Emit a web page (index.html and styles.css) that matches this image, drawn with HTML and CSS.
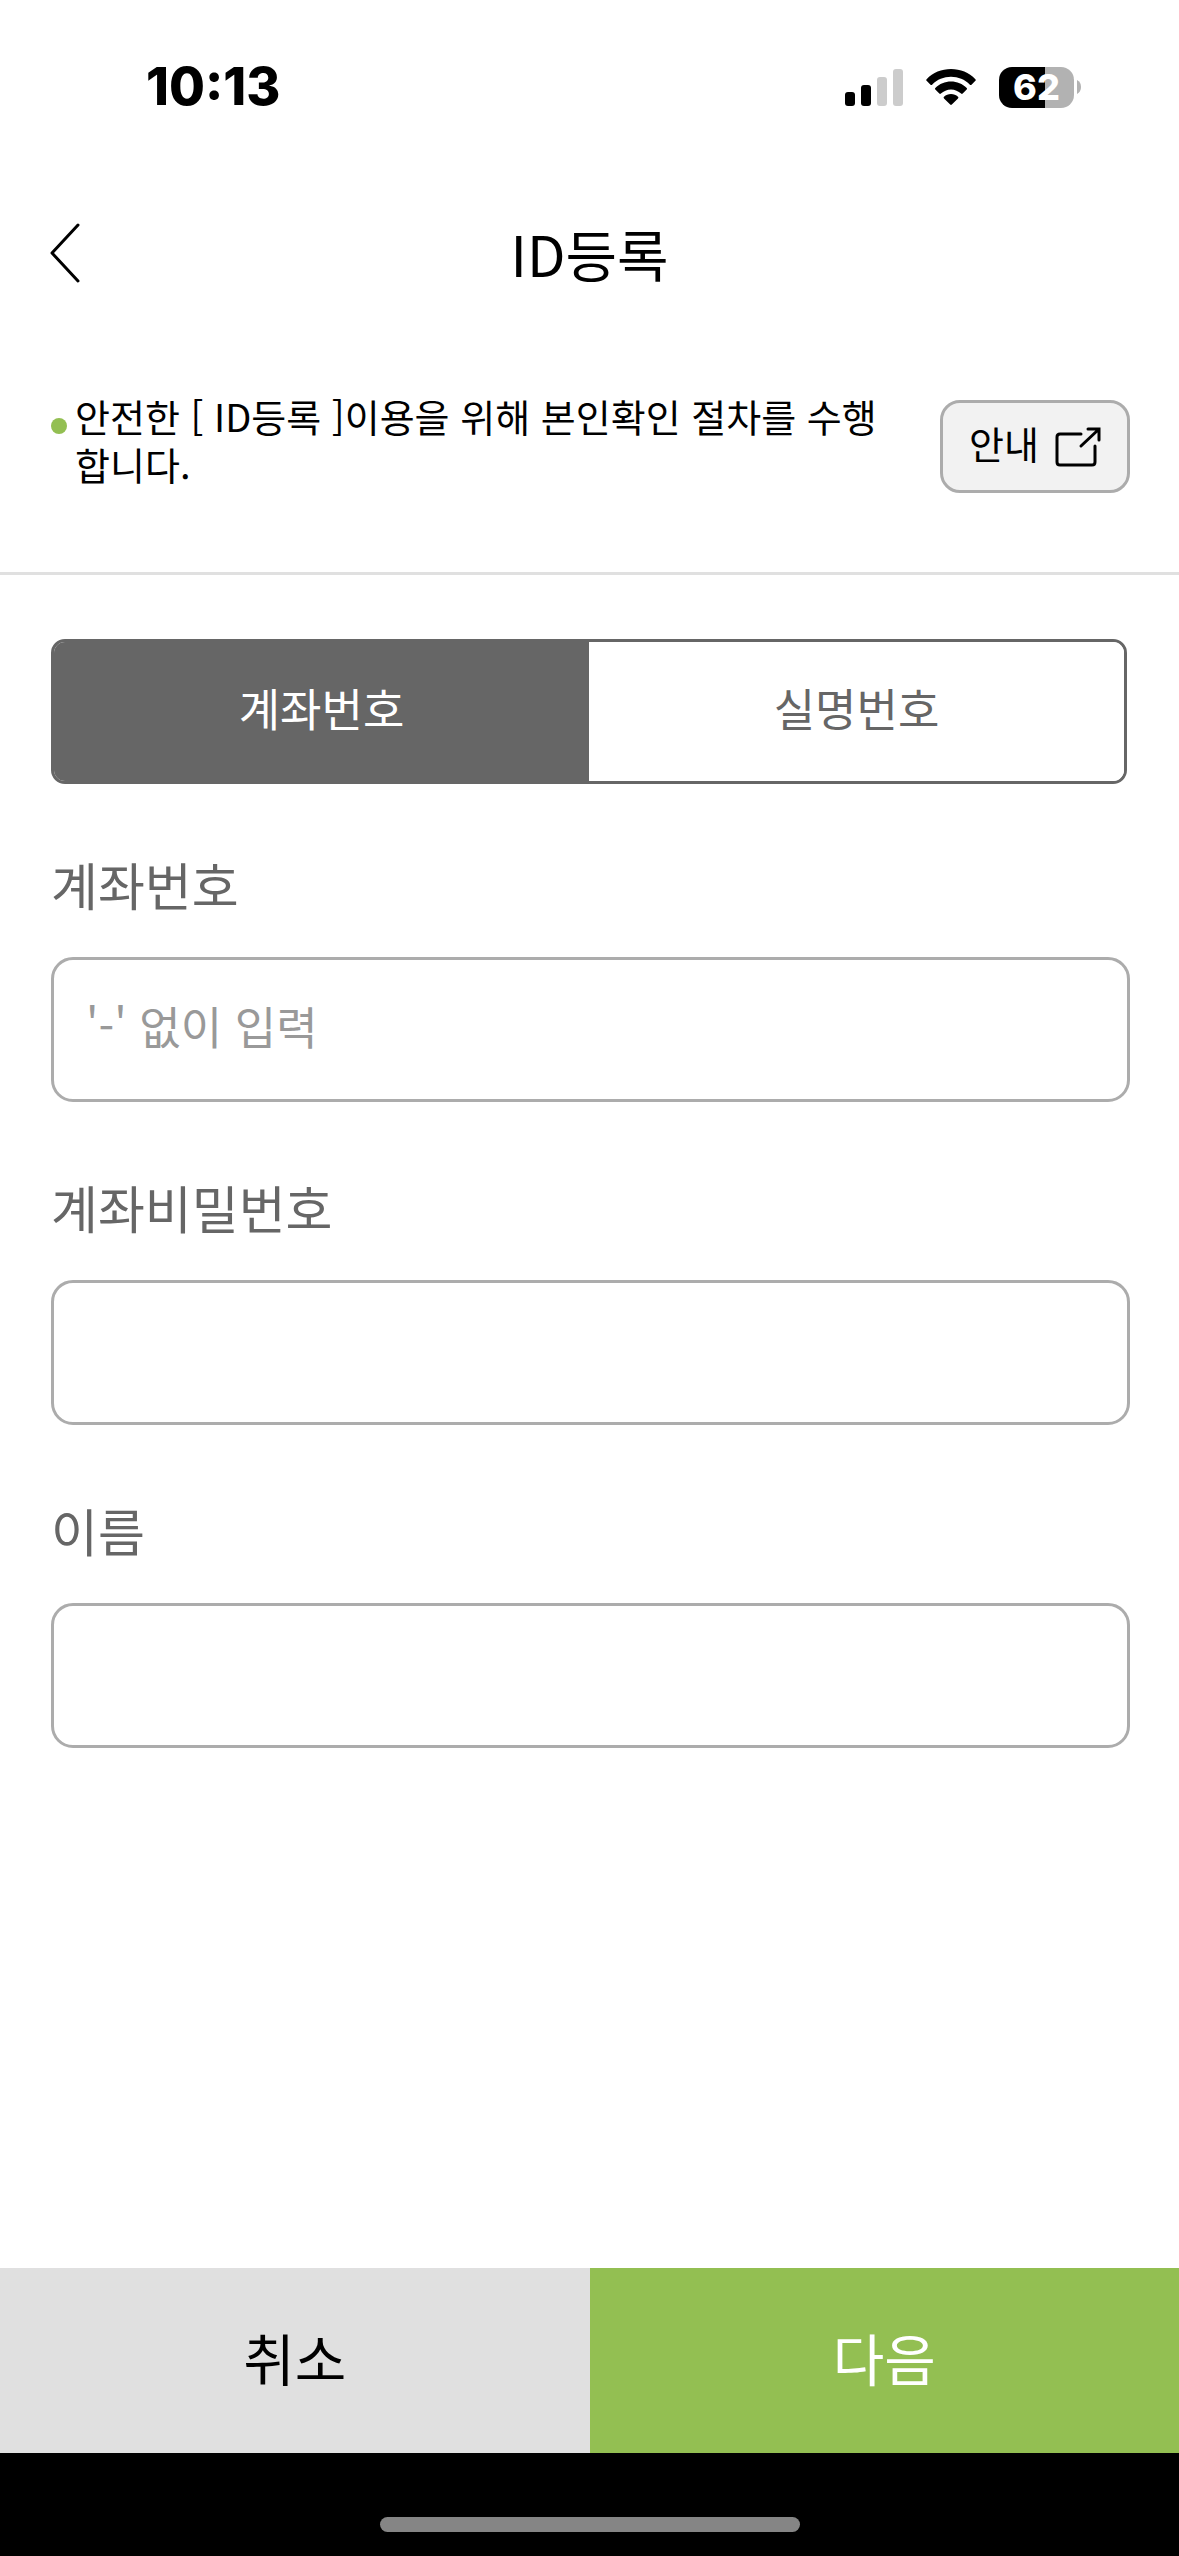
FILE: index.html
```html
<!DOCTYPE html>
<html lang="ko">

<head>
    <meta charset="UTF-8">
    <meta name="viewport" content="width=device-width,initial-scale=1">
    <title>ID등록</title>
    <link rel="stylesheet" href="styles.css">
</head>

<body>
    <div class="wrap">
        <div class="status">
            <span class="time">10:13</span>
            <div class="status-icons">
                <svg class="signal" width="58" height="38" viewBox="0 0 58 38">
                    <rect x="0" y="24" width="10" height="14" rx="3" />
                    <rect x="16" y="17" width="10" height="21" rx="3" />
                    <rect class="off" x="32" y="9" width="10" height="29" rx="3" />
                    <rect class="off" x="48" y="1" width="10" height="37" rx="3" />
                </svg>
                <svg class="wifi" width="50" height="38" viewBox="0 0 50 38">
                    <path d="M.6 11.2C7 4.600 15.600 1 25 1s18 3.600 24.400 10.200q.8.800 0 1.600l-3.900 3.900q-.8.700-1.600 0C38.800 11.500 32.200 8.800 25 8.800S11.200 11.500 6.100 16.700q-.8.700-1.600 0L.6 12.800q-.8-.8 0-1.600z" />
                    <path d="M9.300 20C13.500 15.900 19 13.600 25 13.600S36.500 15.900 40.700 20q.8.800 0 1.600l-4 4q-.8.700-1.600 0c-2.700-2.600-6.200-4.200-10.100-4.200s-7.400 1.600-10.100 4.200q-.8.700-1.600 0l-4-4q-.8-.8 0-1.600z" />
                    <path d="M18 28.700c1.900-1.600 4.300-2.600 7-2.600s5.100 1 7 2.600q.9.800 0 1.700l-6.200 6.200q-.8.800-1.600 0L18 30.400q-.9-.9 0-1.700z" />
                </svg>
                <div class="battery">
                    <span class="level">62</span>
                    <svg class="cap" width="4" height="14" viewBox="0 0 4 14">
                        <path d="M0 0q4 2 4 7t-4 7z" />
                    </svg>
                </div>
            </div>
        </div>

        <header class="header">
            <button class="back" type="button" aria-label="이전">
                <svg width="30" height="60" viewBox="0 0 30 60">
                    <path d="M28 2 2 30l26 28" />
                </svg>
            </button>
            <h1>ID등록</h1>
        </header>

        <section class="notice">
            <p>안전한 [ ID등록 ]이용을 위해 본인확인 절차를 수행합니다.</p>
            <button class="guide" type="button">
                <span>안내</span>
                <svg width="46" height="40" viewBox="0 0 46 40">
                    <path d="M26 7H5Q2 7 2 10v25q0 3 3 3h32q3 0 3-3V19" />
                    <path d="M26 19 43 3M33 2h11v11" />
                </svg>
            </button>
        </section>

        <form class="form">
            <div class="tabs">
                <button class="tab on" type="button">계좌번호</button>
                <button class="tab" type="button">실명번호</button>
            </div>
            <div class="field">
                <label for="account">계좌번호</label>
                <input id="account" type="text" inputmode="numeric" placeholder="'-' 없이 입력">
            </div>
            <div class="field">
                <label for="password">계좌비밀번호</label>
                <input id="password" type="password">
            </div>
            <div class="field">
                <label for="name">이름</label>
                <input id="name" type="text">
            </div>
        </form>

        <div class="buttons">
            <button class="cancel" type="button">취소</button>
            <button class="next" type="button">다음</button>
        </div>
        <div class="home"><span></span></div>
    </div>
    <script>
        var tabs = document.querySelectorAll('.tab');
        for (var i = 0; i < tabs.length; i++) {
            tabs[i].onclick = function() {
                document.querySelector('.tab.on').classList.remove('on');
                this.classList.add('on');
            }
        }
    </script>
</body>

</html>
```
FILE: styles.css
```css
* {
    margin: 0;
    padding: 0;
    box-sizing: border-box;
}

body,
button,
input {
    font-family: "Noto Sans CJK KR", "Noto Sans", sans-serif;
}

button {
    border: none;
    color: #000;
    cursor: pointer;
}

svg {
    display: block;
}

.wrap {
    min-height: 100vh;
    display: flex;
    flex-direction: column;
    background: #fff;
    color: #000;
}

/* 상태바 */
.status {
    height: 174px;
    padding: 0 98px 0 146px;
    display: flex;
    align-items: center;
    justify-content: space-between;
}

.time {
    font: 800 52px/60px Inter, sans-serif;
}

.status-icons {
    display: flex;
    align-items: center;
    gap: 23px;
}

.signal .off {
    fill: #ccc;
}

.battery {
    display: flex;
    align-items: center;
    gap: 3px;
}

.level {
    width: 75px;
    border-radius: 13px;
    background: linear-gradient(to right, #000 62%, #b2b2b2 62%);
    color: #fff;
    font: 800 36px/41px Inter, sans-serif;
    text-align: center;
}

.cap {
    fill: #b2b2b2;
}

/* 헤더 */
.header {
    height: 158px;
    padding: 0 50px;
    display: grid;
    grid-template-columns: 60px 1fr 60px;
    align-items: center;
}

.header h1 {
    font-size: 56px;
    font-weight: 400;
    line-height: 80px;
    text-align: center;
}

.back {
    height: 80px;
    background: none;
}

.back path {
    fill: none;
    stroke: #000;
    stroke-width: 3;
    stroke-linecap: round;
    stroke-linejoin: round;
}

.notice {
    padding: 60px 49px 79px 51px;
    display: flex;
    align-items: flex-start;
    gap: 50px;
    border-bottom: 3px solid #e0e0e0;
}

.notice p {
    flex: 1;
    position: relative;
    padding-left: 24px;
    font-size: 38px;
    line-height: 48px;
    word-break: break-all;
}

.notice p::before {
    content: "";
    position: absolute;
    left: 0;
    top: 26px;
    width: 16px;
    height: 16px;
    border-radius: 50%;
    background: #93bf52;
}

.guide {
    width: 190px;
    height: 93px;
    margin-top: 8px;
    display: flex;
    align-items: center;
    justify-content: center;
    gap: 16px;
    border: 3px solid #acacac;
    border-radius: 20px;
    background: #f2f2f2;
    font-size: 38px;
    line-height: 48px;
}

.guide span {
    padding-bottom: 8px;
}

.guide path {
    fill: none;
    stroke: #000;
    stroke-width: 3;
    stroke-linecap: round;
}

/* 입력 폼 */
.form {
    flex: 1;
    padding: 64px 49px 64px 51px;
}

.tabs {
    height: 145px;
    margin-right: 3px;
    display: flex;
    border: 3px solid #666;
    border-radius: 14px;
    overflow: hidden;
}

.tab {
    flex: 1;
    padding-bottom: 8px;
    background: #fff;
    color: #666;
    font-size: 45px;
}

.tab.on {
    background: #666;
    color: #fff;
}

.field {
    margin-top: 70px;
    display: flex;
    flex-direction: column;
    gap: 43px;
}

.field + .field {
    margin-top: 75px;
}

.field label {
    color: #666;
    font-size: 51px;
    line-height: 60px;
}

.field input {
    width: 100%;
    height: 145px;
    padding: 0 32px 8px;
    border: 3px solid #acacac;
    border-radius: 22px;
    background: #fff;
    font-size: 45px;
}

.field input::placeholder {
    color: #999;
}

/* 하단 버튼 */
.buttons {
    display: flex;
}

.buttons button {
    flex: 1;
    height: 185px;
    padding-bottom: 8px;
    font-size: 56px;
}

.buttons .cancel {
    background: #e0e0e0;
}

.buttons .next {
    background: #93bf52;
    color: #fff;
}

.home {
    height: 103px;
    padding-bottom: 24px;
    display: flex;
    align-items: flex-end;
    justify-content: center;
    background: #000;
}

.home span {
    width: 420px;
    height: 15px;
    border-radius: 8px;
    background: #858585;
}
```
